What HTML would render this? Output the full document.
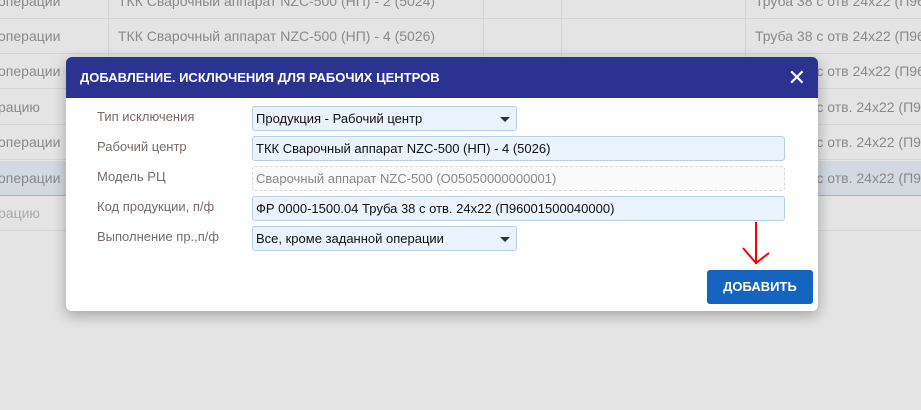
<!DOCTYPE html>
<html><head><meta charset="utf-8"><style>
*{box-sizing:border-box}
body{margin:0;width:921px;height:410px;overflow:hidden;background:#e4e4e4;font-family:"Liberation Sans",sans-serif;position:relative}
.row{position:absolute;left:0;width:921px;height:35px;border-bottom:1px solid #d6d6d6;color:#8a8a8a;font-size:14px;white-space:nowrap;overflow:hidden}
.row span{position:absolute;top:9px;white-space:nowrap}
.vl{position:absolute;top:0;height:232px;width:1px;background:#d6d6d6}
.modal{position:absolute;left:66px;top:57px;width:752px;height:254px;background:#fff;border-radius:6px;box-shadow:0 4px 14px rgba(0,0,0,.3);overflow:hidden}
.hd{height:41px;background:#2a3390;color:#fff;font-weight:bold;font-size:13px;padding:13px 0 0 14px}
.x{position:absolute;right:12px;top:8px;color:#fff;font-size:22px}
.lb{position:absolute;left:31px;color:#7a6a6a;font-size:13px}
.in{position:absolute;left:186px;width:533px;height:25px;background:#eaf2fc;border:1px solid #b8cfe8;border-radius:3px;font-size:13px;color:#111;padding:4px 0 0 3px;white-space:nowrap}
.sel{width:265px}
.sel:after{content:"";position:absolute;right:6px;top:10px;border:5px solid transparent;border-top:5px solid #333}
.dis{background:#fafafa;border:1px dashed #d8d8d8;color:#888}
.btn{position:absolute;left:641px;top:213px;width:106px;height:34px;background:#1565c0;border-radius:3px;color:#fff;font-weight:bold;font-size:13px;text-align:center;line-height:34px}
</style></head><body>
<div class="row" style="top:-16px"><span style="left:-2px">операции</span><span style="left:118px">ТКК Сварочный аппарат NZC-500 (НП) - 2 (5024)</span><span style="left:755px">Труба 38 с отв 24x22 (П96</span></div>
<div class="row" style="top:19px"><span style="left:-2px">операции</span><span style="left:118px">ТКК Сварочный аппарат NZC-500 (НП) - 4 (5026)</span><span style="left:755px">Труба 38 с отв 24x22 (П96</span></div>
<div class="row" style="top:54px"><span style="left:-2px">операции</span><span style="left:755px">Труба 38 с отв 24x22 (П96</span></div>
<div class="row" style="top:90px"><span style="left:-2px">рацию</span><span style="left:755px">Труба 38 с отв. 24x22 (П9</span></div>
<div class="row" style="top:125px"><span style="left:-2px">операции</span><span style="left:755px">Труба 38 с отв. 24x22 (П9</span></div>
<div class="row" style="top:161px;background:#d3d8e0;border-bottom:1px solid #98b4d8"><span style="left:-2px">операции</span><span style="left:755px">Труба 38 с отв. 24x22 (П9</span></div>
<div class="row" style="top:196px;color:#aaa"><span style="left:-2px">рацию</span></div>
<div class="vl" style="left:108px"></div><div class="vl" style="left:483px"></div><div class="vl" style="left:561px"></div><div class="vl" style="left:745px"></div>
<div class="modal">
<div class="hd">ДОБАВЛЕНИЕ. ИСКЛЮЧЕНИЯ ДЛЯ РАБОЧИХ ЦЕНТРОВ</div><div class="x">✕</div>
<div class="lb" style="top:52px">Тип исключения</div><div class="in sel" style="top:49px">Продукция - Рабочий центр</div>
<div class="lb" style="top:82px">Рабочий центр</div><div class="in" style="top:79px">ТКК Сварочный аппарат NZC-500 (НП) - 4 (5026)</div>
<div class="lb" style="top:112px">Модель РЦ</div><div class="in dis" style="top:109px">Сварочный аппарат NZC-500 (О05050000000001)</div>
<div class="lb" style="top:142px">Код продукции, п/ф</div><div class="in" style="top:139px">ФР 0000-1500.04 Труба 38 с отв. 24x22 (П96001500040000)</div>
<div class="lb" style="top:172px">Выполнение пр.,п/ф</div><div class="in sel" style="top:169px">Все, кроме заданной операции</div>
<svg style="position:absolute;left:674px;top:165px" width="32" height="45"><path d="M16 0V42M3 26L16 41L29 31" stroke="#f00" stroke-width="2" fill="none"/></svg>
<div class="btn">ДОБАВИТЬ</div>
</div>
</body></html>
